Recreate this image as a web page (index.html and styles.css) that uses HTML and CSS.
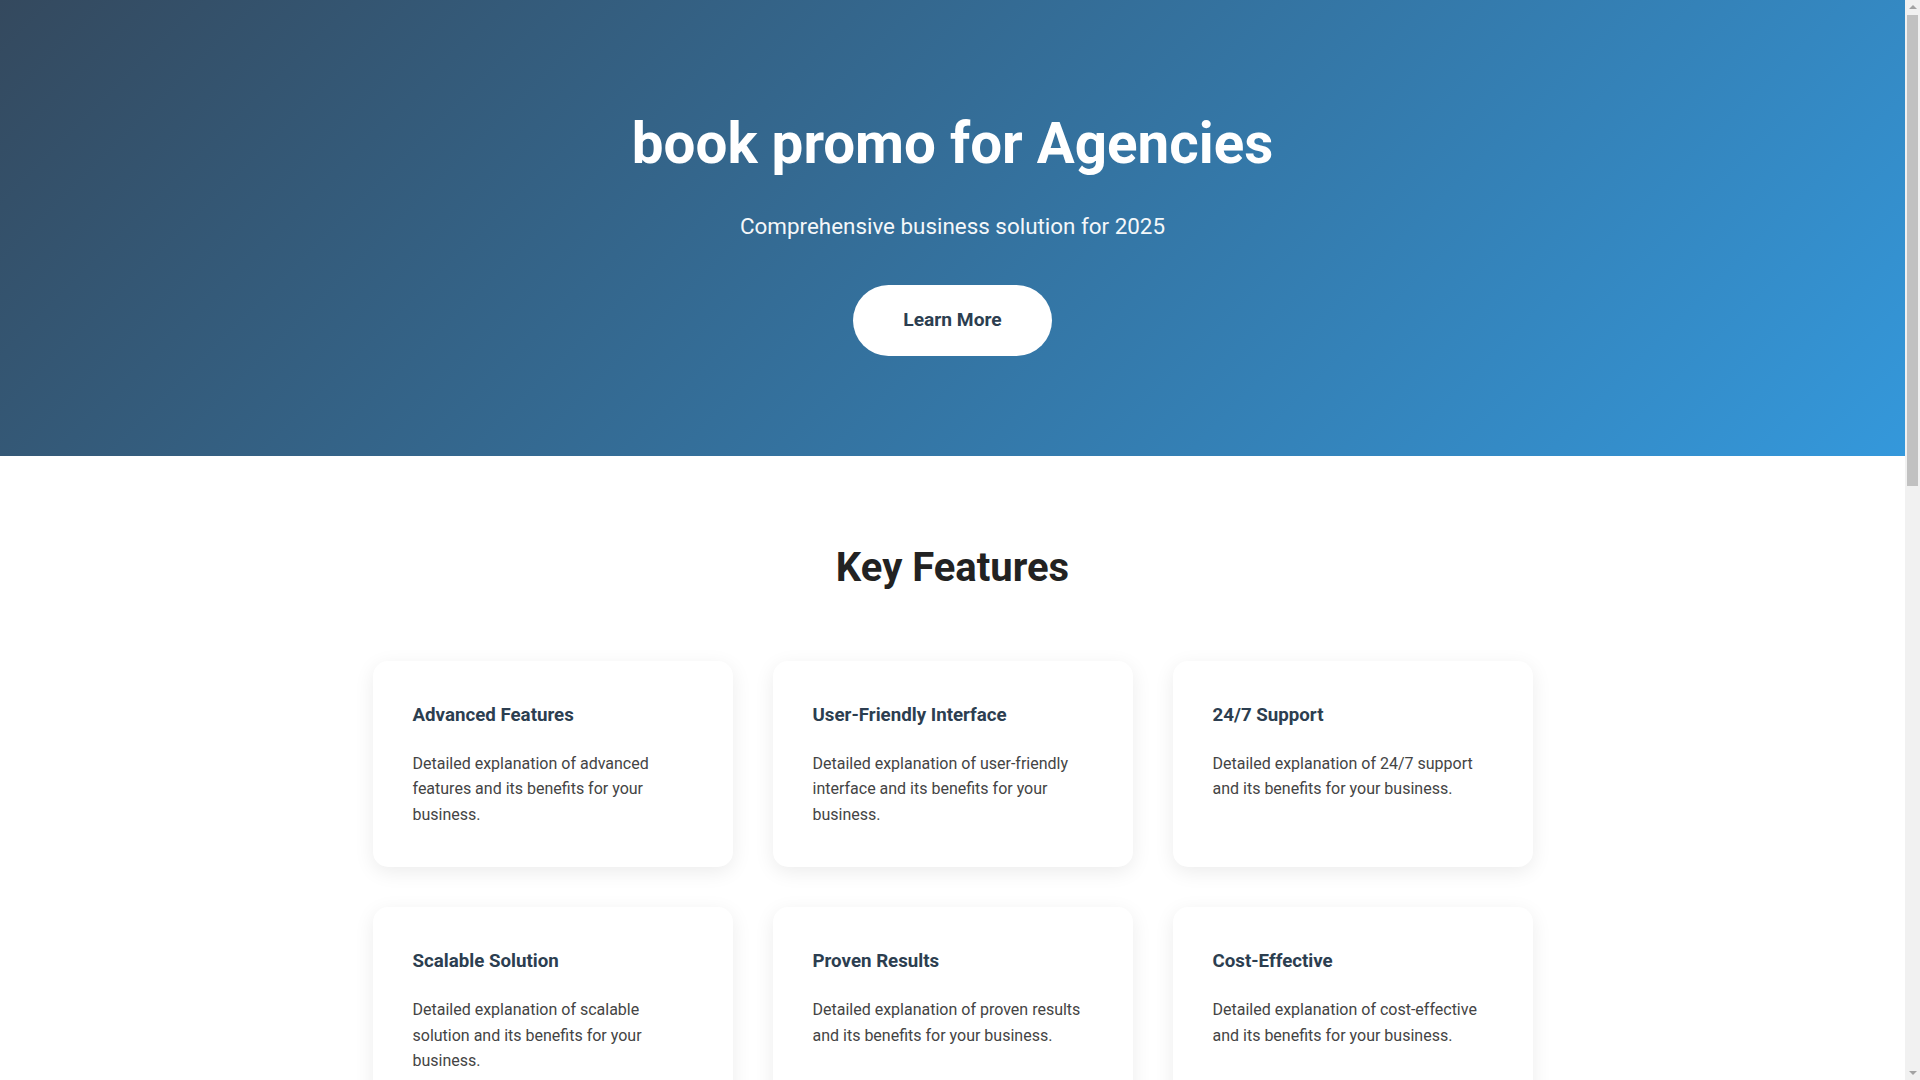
FILE: index.html
```html
<!DOCTYPE html>
<html lang="en">
<head>
<meta charset="UTF-8">
<title>book promo for Agencies</title>
<link rel="stylesheet" href="styles.css">
</head>
<body>
<header class="hero">
  <h1 class="hero-title">book promo for Agencies</h1>
  <p class="hero-subtitle">Comprehensive business solution for 2025</p>
  <a class="hero-button" href="#features">Learn More</a>
</header>

<section class="features" id="features">
  <div class="container">
    <h2 class="section-title">Key Features</h2>
    <div class="feature-grid">
      <div class="feature-card">
        <h3 class="feature-title">Advanced Features</h3>
        <p class="feature-text">Detailed explanation of advanced features and its benefits for your business.</p>
      </div>
      <div class="feature-card">
        <h3 class="feature-title">User-Friendly Interface</h3>
        <p class="feature-text">Detailed explanation of user-friendly interface and its benefits for your business.</p>
      </div>
      <div class="feature-card">
        <h3 class="feature-title">24/7 Support</h3>
        <p class="feature-text">Detailed explanation of 24/7 support and its benefits for your business.</p>
      </div>
      <div class="feature-card">
        <h3 class="feature-title">Scalable Solution</h3>
        <p class="feature-text">Detailed explanation of scalable solution and its benefits for your business.</p>
      </div>
      <div class="feature-card">
        <h3 class="feature-title">Proven Results</h3>
        <p class="feature-text">Detailed explanation of proven results and its benefits for your business.</p>
      </div>
      <div class="feature-card">
        <h3 class="feature-title">Cost-Effective</h3>
        <p class="feature-text">Detailed explanation of cost-effective and its benefits for your business.</p>
      </div>
    </div>
  </div>
</section>

<section class="testimonials">
  <div class="container">
    <h2 class="section-title">What Our Clients Say</h2>
    <div class="feature-grid">
      <div class="feature-card">
        <p class="feature-text">"This solution transformed the way our agency works."</p>
        <h3 class="feature-title">Client A</h3>
      </div>
      <div class="feature-card">
        <p class="feature-text">"Reliable, fast and easy to use for the whole team."</p>
        <h3 class="feature-title">Client B</h3>
      </div>
      <div class="feature-card">
        <p class="feature-text">"Great support and measurable results from day one."</p>
        <h3 class="feature-title">Client C</h3>
      </div>
    </div>
  </div>
</section>

<section class="cta">
  <h2 class="cta-title">Ready to Get Started?</h2>
  <p class="hero-subtitle">Join agencies already growing with book promo</p>
  <a class="hero-button" href="#features">Learn More</a>
</section>

<footer class="footer">
  <p>&copy; 2025 book promo. All rights reserved.</p>
</footer>

<div class="scrollbar" aria-hidden="true">
  <span class="scroll-arrow scroll-up"></span>
  <span class="scroll-thumb"></span>
  <span class="scroll-arrow scroll-down"></span>
</div>
</body>
</html>
```

FILE: styles.css
```css
* {
  box-sizing: border-box;
}

html, body {
  margin: 0;
  padding: 0;
}

body {
  font-family: Roboto, "Liberation Sans", Arial, sans-serif;
  font-size: 16px;
  line-height: 1.6;
  color: #333;
  background: #fff;
  margin-right: 15px;
}

.hero {
  background: linear-gradient(135deg, #34495e 0%, #3498db 100%);
  color: #fff;
  text-align: center;
  padding: 100px 20px;
}

.hero-title {
  font-size: 56.5px;
  font-weight: 700;
  line-height: 89px;
  margin: 0 0 20px;
}

.hero-subtitle {
  font-size: 22.4px;
  font-weight: 400;
  margin: 0 0 40px;
  opacity: 0.95;
}

.hero-button {
  display: inline-block;
  background: #fff;
  color: #2c3e50;
  font-size: 19.2px;
  font-weight: 700;
  text-decoration: none;
  padding: 20px 50px;
  border-radius: 50px;
  line-height: 1.6;
}

.features {
  padding: 80px 0;
}

.container {
  max-width: 1200px;
  margin: 0 auto;
  padding: 0 20px;
}

.section-title {
  font-size: 40px;
  font-weight: 700;
  color: #222;
  text-align: center;
  line-height: 1.6;
  margin: 0 0 61px;
}

.feature-grid {
  display: grid;
  grid-template-columns: repeat(3, 1fr);
  gap: 40px;
}

.feature-card {
  background: #fff;
  border-radius: 15px;
  padding: 40px;
  box-shadow: 0 5px 20px rgba(0, 0, 0, 0.08);
}

.feature-title {
  font-size: 18.72px;
  font-weight: 700;
  color: #2c3e50;
  margin: 0 0 20px;
}

.feature-text {
  margin: 0;
  color: #444;
}

.testimonials {
  padding: 40px 0 100px;
  background: #f8f9fa;
}

.testimonials .feature-text {
  margin-bottom: 20px;
}

.testimonials .feature-title {
  margin: 0;
}

.cta {
  background: linear-gradient(135deg, #34495e 0%, #3498db 100%);
  color: #fff;
  text-align: center;
  padding: 100px 20px;
}

.cta-title {
  font-size: 40px;
  margin: 0 0 20px;
}

.footer {
  background: #2c3e50;
  color: #fff;
  text-align: center;
  padding: 60px 20px;
}

.footer p {
  margin: 0;
}

/* browser scrollbar overlay */
.scrollbar {
  position: fixed;
  top: 0;
  right: 0;
  width: 15px;
  height: 100vh;
  background: #f1f1f1;
}

.scroll-thumb {
  position: absolute;
  top: 15px;
  left: 2px;
  width: 11px;
  height: 471px;
  background: #c1c1c1;
}

.scroll-arrow {
  position: absolute;
  left: 3.5px;
  width: 0;
  height: 0;
  border-left: 4px solid transparent;
  border-right: 4px solid transparent;
}

.scroll-up {
  top: 5px;
  border-bottom: 4px solid #a3a3a3;
}

.scroll-down {
  bottom: 5px;
  border-top: 4px solid #a3a3a3;
}
```
